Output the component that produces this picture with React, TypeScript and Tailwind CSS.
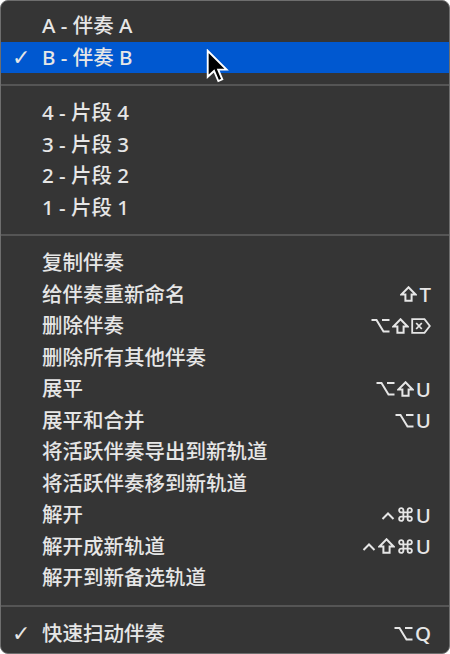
import React from "react";
import { Command } from "lucide-react";

type Key = "shift" | "opt" | "del" | "cmd" | "ctrl" | string;
type Item = { label: string; keys?: Key[]; checked?: boolean; active?: boolean };

const groups: Item[][] = [
  [
    { label: "A - 伴奏 A" },
    { label: "B - 伴奏 B", checked: true, active: true },
  ],
  [
    { label: "4 - 片段 4" },
    { label: "3 - 片段 3" },
    { label: "2 - 片段 2" },
    { label: "1 - 片段 1" },
  ],
  [
    { label: "复制伴奏" },
    { label: "给伴奏重新命名", keys: ["shift", "T"] },
    { label: "删除伴奏", keys: ["opt", "shift", "del"] },
    { label: "删除所有其他伴奏" },
    { label: "展平", keys: ["opt", "shift", "U"] },
    { label: "展平和合并", keys: ["opt", "U"] },
    { label: "将活跃伴奏导出到新轨道" },
    { label: "将活跃伴奏移到新轨道" },
    { label: "解开", keys: ["ctrl", "cmd", "U"] },
    { label: "解开成新轨道", keys: ["ctrl", "shift", "cmd", "U"] },
    { label: "解开到新备选轨道" },
  ],
  [{ label: "快速扫动伴奏", keys: ["opt", "Q"], checked: true }],
];

function KeyGlyph({ k }: { k: Key }) {
  const common = { fill: "none", stroke: "currentColor", strokeWidth: 2, strokeLinejoin: "miter" as const };
  if (k === "shift")
    return (
      <svg width="17" height="16" viewBox="0 0 17 16">
        <path d="M8.5 1.3 L15.6 8.6 L11.6 8.6 L11.6 14.8 L5.4 14.8 L5.4 8.6 L1.4 8.6 Z" {...common} />
      </svg>
    );
  if (k === "opt")
    return (
      <svg width="19" height="15" viewBox="0 0 19 15">
        <path d="M0.5 2 H5.5 L12.5 13.5 H18.5 M11 2 H18.5" {...common} />
      </svg>
    );
  if (k === "del")
    return (
      <svg width="20" height="16" viewBox="0 0 20 16">
        <path d="M1.2 1.2 H13.5 L18.8 8 L13.5 14.8 H1.2 Z" {...common} strokeWidth={1.8} />
        <path d="M5.2 5 L10.8 11 M10.8 5 L5.2 11" {...common} strokeWidth={1.8} />
      </svg>
    );
  if (k === "cmd") return <Command size={17} strokeWidth={2.6} />;
  if (k === "ctrl")
    return (
      <svg width="14" height="16" viewBox="0 0 14 16" className="self-start mt-[6px]">
        <path d="M1.5 8 L7 2.5 L12.5 8" {...common} />
      </svg>
    );
  return <span className="leading-none">{k}</span>;
}

function Cursor() {
  return (
    <svg width="24" height="36" viewBox="0 0 14 21" className="absolute left-[205px] top-[48px]">
      <path
        d="M1 1 L1 16.2 L4.7 12.8 L7.2 18.7 L9.5 17.7 L7.1 12 L12 12 Z"
        fill="#000"
        stroke="#fff"
        strokeWidth="1.1"
      />
    </svg>
  );
}

function Row({ item }: { item: Item }) {
  return (
    <div className={`h-[31.5px] flex items-center pr-[18px] ${item.active ? "bg-[#0058d0]" : ""}`}>
      <span
        className="w-[41px] pl-[11px] text-[22px] font-normal"
        style={{ fontFamily: '"DejaVu Sans", sans-serif' }}
      >
        {item.checked ? "✓" : ""}
      </span>
      <span className="flex-1">{item.label}</span>
      {item.keys && (
        <span className="flex items-center gap-[2px] h-[20px]">
          {item.keys.map((k, i) => (
            <KeyGlyph key={i} k={k} />
          ))}
        </span>
      )}
    </div>
  );
}

export default function App() {
  return (
    <div className="w-[450px] h-[654px] bg-white">
      <div
        className="relative w-[450px] h-[654px] bg-[#353535] rounded-[8px] border border-[#6e6e6e] pt-[9px] text-[#e6e6e6] text-[20.5px] font-medium overflow-hidden"
        style={{ fontFamily: '"Noto Sans", "Noto Sans CJK SC", sans-serif' }}
      >
        {groups.map((g, gi) => (
          <div key={gi}>
            {gi > 0 && (
              <div className="h-[24px] flex items-center">
                <div className="w-full h-[2px] bg-[#555555]" />
              </div>
            )}
            {g.map((item, i) => (
              <Row key={i} item={item} />
            ))}
          </div>
        ))}
        <Cursor />
      </div>
    </div>
  );
}
